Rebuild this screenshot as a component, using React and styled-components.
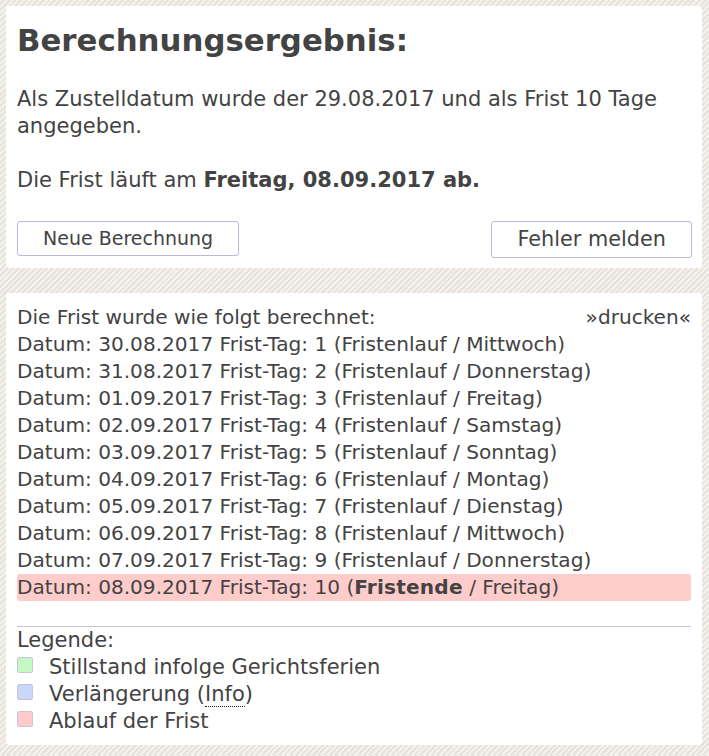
import React from "react";
import styled, { createGlobalStyle } from "styled-components";

const GlobalStyle = createGlobalStyle`
  html, body {
    margin: 0;
    padding: 0;
  }
  body {
    background-color: #efece6;
    background-image: repeating-linear-gradient(
      135deg,
      #f4f2ee 0px,
      #f4f2ee 2px,
      #e7e3db 2px,
      #e7e3db 4px
    );
    font-family: "DejaVu Sans", Verdana, sans-serif;
    color: #434343;
  }
`;

const Page = styled.div`
  display: flex;
  flex-direction: column;
  gap: 25px;
  padding: 6px 7px 10px 6px;
`;

const Panel = styled.section`
  background: #fff;
  border-radius: 4px;
  padding: ${(p) => p.$pad};
`;

const Title = styled.h1`
  margin: 0;
  font-size: 30.8px;
  line-height: 36px;
  font-weight: bold;
  color: #434343;
`;

const Para = styled.p`
  margin: ${(p) => p.$mt}px 0 0;
  font-size: 21px;
  line-height: 27px;
`;

const ButtonRow = styled.div`
  display: flex;
  justify-content: space-between;
  align-items: flex-start;
  margin-top: 27px;
`;

const Button = styled.button`
  font-family: "DejaVu Sans", Verdana, sans-serif;
  font-size: ${(p) => p.$size}px;
  height: ${(p) => p.$h}px;
  padding: 0 25px;
  background: #fff;
  color: #434343;
  border: 1px solid #bdb8dc;
  border-radius: 3px;
  line-height: 1;
`;

const HeaderRow = styled.div`
  display: flex;
  justify-content: space-between;
  font-size: 20.1px;
  line-height: 27px;
`;

const Row = styled.div`
  font-size: 20.1px;
  line-height: 27px;
  border-radius: 3px;
  background: ${(p) => (p.$end ? "#ffcccc" : "transparent")};
`;

const Strong = styled.b`
  font-weight: bold;
  letter-spacing: 0.2px;
`;

const Rule = styled.hr`
  margin: 25px 0 0;
  border: 0;
  border-top: 1px solid #c9c3e3;
  height: 0;
`;

const LegendTitle = styled.div`
  font-size: 21px;
  line-height: 27px;
`;

const LegendItem = styled.div`
  display: flex;
  align-items: flex-start;
  font-size: 21px;
  line-height: 27px;
`;

const Swatch = styled.span`
  flex: none;
  width: 14px;
  height: 14px;
  margin: 3px 16px 0 0;
  border: 1px solid #c8c6da;
  border-radius: 2px;
  background: ${(p) => p.$color};
`;

const Abbr = styled.span`
  border-bottom: 1px dotted #222;
`;

const days = [
  ["30.08.2017", 1, "Mittwoch"],
  ["31.08.2017", 2, "Donnerstag"],
  ["01.09.2017", 3, "Freitag"],
  ["02.09.2017", 4, "Samstag"],
  ["03.09.2017", 5, "Sonntag"],
  ["04.09.2017", 6, "Montag"],
  ["05.09.2017", 7, "Dienstag"],
  ["06.09.2017", 8, "Mittwoch"],
  ["07.09.2017", 9, "Donnerstag"],
];

export default function App() {
  return (
    <>
      <GlobalStyle />
      <Page>
        <Panel $pad="16px 10px 10px 11px">
          <Title>Berechnungsergebnis:</Title>
          <Para $mt={28}>
            Als Zustelldatum wurde der 29.08.2017 und als Frist 10 Tage angegeben.
          </Para>
          <Para $mt={27}>
            Die Frist läuft am <b>Freitag, 08.09.2017 ab.</b>
          </Para>
          <ButtonRow>
            <Button $size={19} $h={35}>Neue Berechnung</Button>
            <Button $size={20.8} $h={37}>Fehler melden</Button>
          </ButtonRow>
        </Panel>
        <Panel $pad="11px 11px 10px 11px">
          <HeaderRow>
            <span>Die Frist wurde wie folgt berechnet:</span>
            <span>»drucken«</span>
          </HeaderRow>
          {days.map(([d, n, w]) => (
            <Row key={d}>
              Datum: {d} Frist-Tag: {n} (Fristenlauf / {w})
            </Row>
          ))}
          <Row $end>
            Datum: 08.09.2017 Frist-Tag: 10 (<Strong>Fristende</Strong> / Freitag)
          </Row>
          <Rule />
          <LegendTitle>Legende:</LegendTitle>
          <LegendItem>
            <Swatch $color="#c4f8c4" />
            Stillstand infolge Gerichtsferien
          </LegendItem>
          <LegendItem>
            <Swatch $color="#cad6fa" />
            <span>
              Verlängerung (<Abbr>Info</Abbr>)
            </span>
          </LegendItem>
          <LegendItem>
            <Swatch $color="#ffcaca" />
            Ablauf der Frist
          </LegendItem>
        </Panel>
      </Page>
    </>
  );
}
